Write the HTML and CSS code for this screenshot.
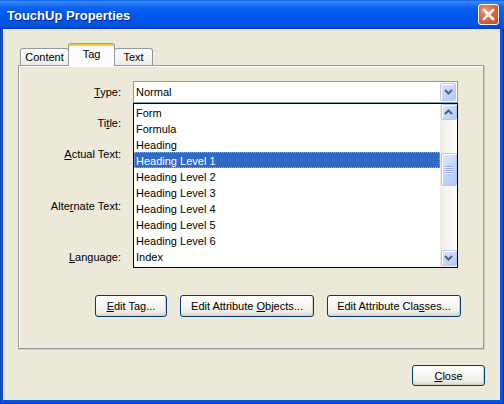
FILE: index.html
```html
<!DOCTYPE html>
<html>
<head>
<meta charset="utf-8">
<title>TouchUp Properties</title>
<link rel="stylesheet" href="styles.css">
</head>
<body>
<div class="window">
  <div class="titlebar">
    <span class="title">TouchUp Properties</span>
    <span class="close-x">
      <svg width="19" height="19" viewBox="0 0 19 19"><path d="M5 5 L14 14 M14 5 L5 14" stroke="#fff" stroke-width="2.6" stroke-linecap="square" fill="none"/></svg>
    </span>
  </div>
  <div class="client">
    <div class="tabs">
      <div class="tab tab-content">Content</div>
      <div class="tab tab-tag active">Tag</div>
      <div class="tab tab-text">Text</div>
    </div>
    <div class="panel">
      <div class="form">
        <label class="lbl"><u>T</u>ype:</label>
        <div class="combo">
          <span class="combo-text">Normal</span>
          <span class="xpbtn dd-btn">
            <svg width="9" height="6" viewBox="0 0 9 6"><path d="M1 1 L4.5 4.5 L8 1" stroke="#4D6185" stroke-width="2" fill="none"/></svg>
          </span>
          <div class="listbox">
            <div class="items">
              <div class="item">Form</div>
              <div class="item">Formula</div>
              <div class="item">Heading</div>
              <div class="item selected">Heading Level 1</div>
              <div class="item">Heading Level 2</div>
              <div class="item">Heading Level 3</div>
              <div class="item">Heading Level 4</div>
              <div class="item">Heading Level 5</div>
              <div class="item">Heading Level 6</div>
              <div class="item">Index</div>
            </div>
            <div class="scrollbar">
              <span class="xpbtn sb-btn">
                <svg width="9" height="6" viewBox="0 0 9 6"><path d="M1 5 L4.5 1.5 L8 5" stroke="#4D6185" stroke-width="2" fill="none"/></svg>
              </span>
              <span class="xpbtn thumb">
                <svg width="8" height="8" viewBox="0 0 8 8"><path d="M0 0.5 H8 M0 2.5 H8 M0 4.5 H8 M0 6.5 H8" stroke="#8CA9EC" stroke-width="1"/><path d="M0 1.5 H8 M0 3.5 H8 M0 5.5 H8 M0 7.5 H8" stroke="#EEF4FE" stroke-width="1"/></svg>
              </span>
              <span class="sb-spacer"></span>
              <span class="xpbtn sb-btn sb-down">
                <svg width="9" height="6" viewBox="0 0 9 6"><path d="M1 1 L4.5 4.5 L8 1" stroke="#4D6185" stroke-width="2" fill="none"/></svg>
              </span>
            </div>
          </div>
        </div>
        <label class="lbl">Ti<u>t</u>le:</label>
        <div class="field"></div>
        <label class="lbl"><u>A</u>ctual Text:</label>
        <div class="field"></div>
        <label class="lbl">Alte<u>r</u>nate Text:</label>
        <div class="field"></div>
        <label class="lbl"><u>L</u>anguage:</label>
        <div class="field"></div>
      </div>
      <div class="btnrow">
        <button class="btn btn-tag"><u>E</u>dit Tag...</button>
        <button class="btn btn-wide">Edit Attribute <u>O</u>bjects...</button>
        <button class="btn btn-wide">Edit Attribute Cla<u>s</u>ses...</button>
      </div>
    </div>
    <div class="footer">
      <button class="btn btn-close"><u>C</u>lose</button>
    </div>
  </div>
</div>
</body>
</html>
```
FILE: styles.css
```css
* { box-sizing: border-box; }
html, body { margin: 0; padding: 0; }
body {
  width: 504px;
  height: 404px;
  overflow: hidden;
  background: #ffffff;
  font-family: "Liberation Sans", Tahoma, Arial, sans-serif;
  font-size: 11px;
  color: #000;
}
u { text-decoration: underline; text-underline-offset: 1px; }

.window {
  width: 504px;
  height: 404px;
  display: flex;
  flex-direction: column;
  background: #0753E3;
  box-shadow: inset 1px 0 0 #0A3FC2, inset -1px 0 0 #0030A8, inset 0 -1px 0 #0030A8;
}

.titlebar {
  height: 29px;
  flex: none;
  display: flex;
  align-items: center;
  justify-content: space-between;
  padding: 0 5px 1px 7px;
  background: linear-gradient(to bottom, #0A5CE8 0%, #3A8CF8 6%, #2A7CF4 12%, #0C63EF 25%, #0058EE 50%, #0056E8 80%, #004CD9 92%, #0042C4 100%);
}
.title {
  color: #fff;
  font-weight: bold;
  font-size: 13px;
  font-family: "Liberation Sans", "Trebuchet MS", Arial, sans-serif;
  text-shadow: 1px 1px 0 #0A1D8A;
  padding-top: 2px;
}
.close-x {
  width: 21px;
  height: 21px;
  border: 1px solid #ffffff;
  border-radius: 3px;
  background: radial-gradient(circle at 35% 30%, #EF9A80 0%, #E3643F 45%, #CC4419 100%);
  display: flex;
  align-items: center;
  justify-content: center;
  margin-top: 1px;
}

.client {
  flex: 1;
  margin: 0 4px 4px 3px;
  background: #ECE9D8;
  padding: 14px 17px 0 15px;
  display: flex;
  flex-direction: column;
}

.tabs {
  display: flex;
  align-items: flex-end;
  height: 22px;
  margin-left: 2px;
  position: relative;
  z-index: 2;
}
.tab {
  height: 17px;
  border: 1px solid #919B9C;
  border-bottom: none;
  border-radius: 3px 3px 0 0;
  background: linear-gradient(to bottom, #FFFFFF 0%, #F7F7F4 50%, #ECEBE6 100%);
  text-align: center;
  line-height: 17px;
}
.tab-content { width: 49px; }
.tab-tag { width: 45px; }
.tab-text { width: 39px; margin-left: -1px; }
.tab.active {
  height: 23px;
  margin-bottom: -1px;
  margin-left: -1px;
  width: 47px;
  background: #FCFCFE;
  border-top: 1px solid #E68B2C;
  box-shadow: inset 0 2px 0 #FFC73C;
  line-height: 14px;
  padding-top: 3px;
  position: relative;
  z-index: 1;
}

.panel {
  width: 466px;
  height: 284px;
  border: 1px solid #919B9C;
  background: #ECE9D8;
  box-shadow: inset 1px 1px 0 #FFFFFF, 1px 1px 0 #D0CDBD;
}

.form {
  display: grid;
  grid-template-columns: 102px 325px;
  grid-template-rows: 22px 22px 43px 42px 22px;
  column-gap: 12px;
  row-gap: 9px;
  padding-top: 15px;
}
.lbl {
  text-align: right;
  line-height: 22px;
  white-space: nowrap;
  align-self: start;
}
.field { height: 100%; }

.combo {
  position: relative;
  background: #fff;
  border: 1px solid #7F9DB9;
  display: flex;
  align-items: center;
  padding-left: 2px;
}
.combo-text { line-height: 20px; }

.xpbtn {
  display: flex;
  align-items: center;
  justify-content: center;
  border: 1px solid #B5C7F2;
  border-radius: 2px;
  background: linear-gradient(135deg, #DCE6FD 0%, #C6D6FC 50%, #B3C8F7 100%);
  box-shadow: inset 1px 1px 0 #FFFFFF;
}
.dd-btn {
  margin-left: auto;
  width: 16px;
  height: 18px;
  margin-right: 1px;
}

.listbox {
  position: absolute;
  top: 21px;
  left: -1px;
  width: 325px;
  height: 165px;
  border: 1px solid #000;
  background: #fff;
  display: flex;
  z-index: 5;
}
.items {
  flex: 1;
  display: flex;
  flex-direction: column;
}
.item {
  height: 16px;
  line-height: 16px;
  padding-left: 1px;
  border: 1px solid transparent;
  white-space: nowrap;
}
.item.selected {
  background: #316AC5;
  color: #fff;
  border: 1px dotted #D9A24A;
}

.scrollbar {
  width: 17px;
  display: flex;
  flex-direction: column;
  align-items: center;
  background: linear-gradient(to right, #EEEDE5 0%, #F5F4EF 40%, #FEFEFB 100%);
}
.sb-btn {
  width: 16px;
  height: 16px;
  flex: none;
}
.thumb {
  width: 16px;
  height: 33px;
  margin-top: 33px;
  flex: none;
}
.sb-spacer { flex: 1; }
.sb-down { margin-bottom: 1px; }

.btnrow {
  display: flex;
  gap: 13px;
  padding-left: 76px;
  margin-top: 27px;
}
.btn {
  height: 22px;
  border: 1px solid #003C74;
  border-radius: 3px;
  background: linear-gradient(to bottom, #FFFFFF 0%, #F7F6F2 45%, #EEEDE6 80%, #D8D3C8 100%);
  box-shadow: inset -1px -1px 0 #D6D0C5;
  font-family: "Liberation Sans", Tahoma, Arial, sans-serif;
  font-size: 11px;
  color: #000;
  padding: 0;
  text-align: center;
}
.btn-tag { width: 72px; }
.btn-wide { width: 134px; }

.footer {
  display: flex;
  justify-content: flex-end;
  margin-top: 16px;
  margin-right: -2px;
}
.btn-close { width: 73px; height: 21px; }
```
